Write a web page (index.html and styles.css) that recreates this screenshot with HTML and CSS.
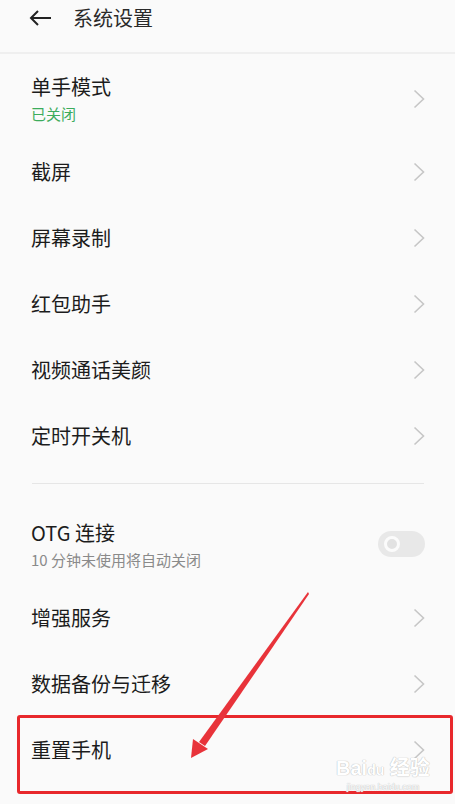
FILE: index.html
```html
<!DOCTYPE html>
<html lang="zh-CN">

<head>
  <meta charset="UTF-8" />
  <meta name="viewport" content="width=device-width, initial-scale=1.0" />
  <title>系统设置</title>
  <link rel="stylesheet" href="styles.css">
</head>

<body>
  <div class="screen">
    <header class="topbar">
      <svg class="back" width="24" height="16" viewBox="0 0 24 16">
        <path d="M22 8 H2 M9 1 L2 8 L9 15" fill="none" stroke="#222" stroke-width="2" />
      </svg>
      <h1 class="title">系统设置</h1>
    </header>

    <div class="row row-first">
      <div class="text">
        <div class="label">单手模式</div>
        <div class="sub green">已关闭</div>
      </div>
      <svg class="chev" width="12" height="20" viewBox="0 0 12 20"><path d="M1.5 1.5 L10.5 10 L1.5 18.5" /></svg>
    </div>
    <div class="row"><div class="label">截屏</div><svg class="chev" width="12" height="20" viewBox="0 0 12 20"><path d="M1.5 1.5 L10.5 10 L1.5 18.5" /></svg></div>
    <div class="row"><div class="label">屏幕录制</div><svg class="chev" width="12" height="20" viewBox="0 0 12 20"><path d="M1.5 1.5 L10.5 10 L1.5 18.5" /></svg></div>
    <div class="row"><div class="label">红包助手</div><svg class="chev" width="12" height="20" viewBox="0 0 12 20"><path d="M1.5 1.5 L10.5 10 L1.5 18.5" /></svg></div>
    <div class="row"><div class="label">视频通话美颜</div><svg class="chev" width="12" height="20" viewBox="0 0 12 20"><path d="M1.5 1.5 L10.5 10 L1.5 18.5" /></svg></div>
    <div class="row"><div class="label">定时开关机</div><svg class="chev" width="12" height="20" viewBox="0 0 12 20"><path d="M1.5 1.5 L10.5 10 L1.5 18.5" /></svg></div>

    <div class="divider"></div>

    <div class="row row-otg">
      <div class="text">
        <div class="label">OTG 连接</div>
        <div class="sub">10 分钟未使用将自动关闭</div>
      </div>
      <span class="toggle"><span class="knob"></span></span>
    </div>
    <div class="row"><div class="label">增强服务</div><svg class="chev" width="12" height="20" viewBox="0 0 12 20"><path d="M1.5 1.5 L10.5 10 L1.5 18.5" /></svg></div>
    <div class="row"><div class="label">数据备份与迁移</div><svg class="chev" width="12" height="20" viewBox="0 0 12 20"><path d="M1.5 1.5 L10.5 10 L1.5 18.5" /></svg></div>
    <div class="row"><div class="label">重置手机</div><svg class="chev" width="12" height="20" viewBox="0 0 12 20"><path d="M1.5 1.5 L10.5 10 L1.5 18.5" /></svg></div>

    <!-- annotation on top of the screenshot -->
    <div class="highlight"></div>
    <svg class="pointer" width="455" height="804" viewBox="0 0 455 804">
      <polygon points="308,592 309,594 205,746 199,742" fill="#e8333a" />
      <polygon points="191,758 193,739 208,749" fill="#e8333a" />
    </svg>
    <div class="watermark">
      <span class="wm-big">Bai<span class="wm-du">du</span> 经验</span>
      <span class="wm-small">jingyan.baidu.com</span>
    </div>
  </div>
</body>

</html>
```

FILE: styles.css
```css
* {
  box-sizing: border-box;
}

body {
  margin: 0;
  background: #fafafa;
  font-family: "Noto Sans CJK SC", "Noto Sans", sans-serif;
  color: #1c1c1c;
}

.screen {
  position: relative;
  width: 455px;
  height: 804px;
  overflow: hidden;
  background: #fafafa;
}

.topbar {
  display: flex;
  align-items: center;
  height: 54px;
  padding: 0 0 2px 29px;
  border-bottom: 2px solid #efefef;
}

.back {
  position: relative;
  top: -7px;
}

.title {
  margin: 0 0 0 20px;
  font-size: 20px;
  font-weight: normal;
  line-height: 28px;
  color: #2a2a2a;
  position: relative;
  top: -7px;
}

.row {
  display: flex;
  align-items: center;
  justify-content: space-between;
  height: 66px;
  padding: 0 30px 0 31px;
}

.row-first {
  height: 85px;
  padding-top: 4px;
}

.row-otg {
  height: 100px;
  padding-top: 18px;
}

.label {
  font-size: 20px;
  line-height: 28px;
}

.sub {
  font-size: 15px;
  line-height: 20px;
  margin-top: 3px;
  color: #8a8a8a;
}

.green {
  color: #3cac5c;
}

.chev {
  fill: none;
  stroke: #c6c6c6;
  stroke-width: 1.6;
}

.divider {
  height: 1px;
  margin: 14px 31px 1px 32px;
  background: #e6e6e6;
}

.toggle {
  display: flex;
  align-items: center;
  width: 47px;
  height: 26px;
  padding-left: 6px;
  border-radius: 13px;
  background: #e8e8e8;
}

.knob {
  width: 16px;
  height: 16px;
  border-radius: 50%;
  border: 3px solid #fbfbfb;
  background: #e2e2e2;
}

.highlight {
  position: absolute;
  left: 17px;
  top: 715px;
  width: 436px;
  height: 79px;
  border: 3px solid #e8282c;
  border-radius: 3px;
}

.pointer {
  position: absolute;
  left: 0;
  top: 0;
}

.watermark {
  position: absolute;
  left: 336px;
  top: 757px;
  display: flex;
  flex-direction: column;
  align-items: center;
  color: #fff;
  text-shadow: 0 0 1px #bdbdbd, 0 0 1px #bdbdbd;
}

.wm-big {
  font-family: "Liberation Sans", "Noto Sans CJK SC", sans-serif;
  font-size: 20px;
  font-weight: bold;
  line-height: 22px;
}

.wm-du {
  font-size: 14px;
}

.wm-small {
  font-family: "Liberation Sans", sans-serif;
  font-size: 9px;
  line-height: 12px;
}
```
